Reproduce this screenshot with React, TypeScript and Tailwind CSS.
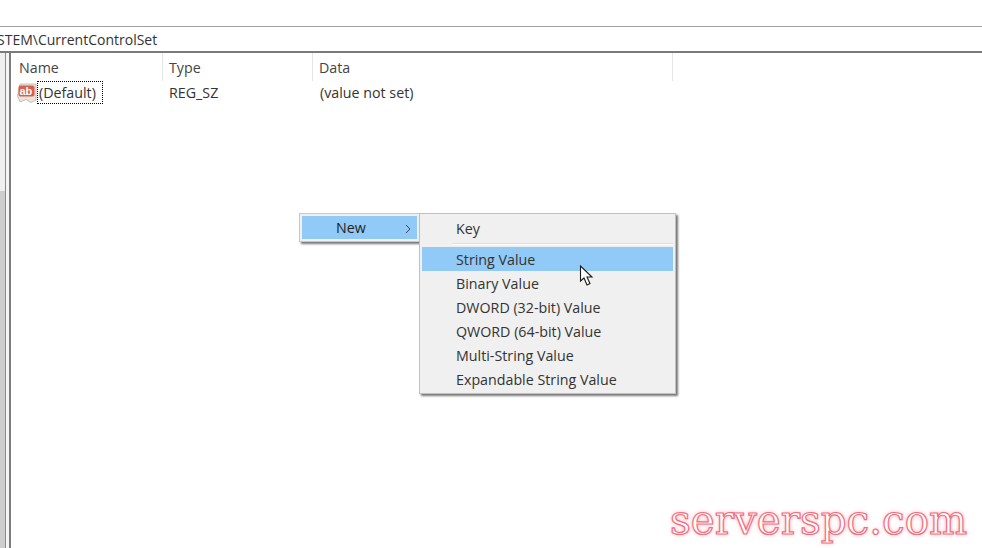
import React from 'react';

const font = { sans: "font-['Open_Sans','Noto_Sans',sans-serif]" };

const subItems = ['Binary Value', 'DWORD (32-bit) Value', 'QWORD (64-bit) Value', 'Multi-String Value', 'Expandable String Value'];

const RegIcon = () => (
  <svg width="20" height="20" viewBox="0 0 20 20" className="shrink-0">
    <path d="M0.5 13 L3 19 L9 16.5 L14 19.5 L19 17 L19 1 L3 1 Z" fill="#e8e4dc" stroke="#b9b5ad" strokeWidth="0.8" />
    <rect x="1.5" y="2.5" width="16" height="11" rx="2" fill="#d9604a" />
    <text x="2.4" y="11.5" fontSize="11" fontWeight="700" fill="#fff" fontFamily="'Liberation Sans', sans-serif">ab</text>
  </svg>
);

const Cursor = () => (
  <svg width="15" height="22" viewBox="0 0 15 22" className="absolute left-[579px] top-[265px]">
    <path d="M1.5 1 L1.5 16 L5 13 L8 20 L11 18.5 L8 12 L13 12 Z" fill="#fff" stroke="#1a1a1a" strokeWidth="1.1" strokeLinejoin="miter" />
  </svg>
);

export default function App() {
  return (
    <div className={`relative w-[982px] h-[548px] overflow-hidden bg-white text-[#222] ${font.sans}`}>
      <div className="flex flex-col h-full">
        <div className="h-[27px] shrink-0 bg-white border-b border-[#a0a0a0]" />
        <div className="h-[24px] shrink-0 box-content border-b-2 border-[#7a7a7a] flex items-center overflow-hidden">
          <span className="ml-[-3px] pt-[2px] text-[14px] leading-none text-[#333]">STEM\CurrentControlSet</span>
        </div>
        <div className="flex flex-1">
          <div className="w-[6px] shrink-0 flex flex-col border-r border-[#8a8a8a]">
            <div className="h-[138px] bg-[#efefef]" />
            <div className="flex-1 bg-[#cdcdcd]" />
          </div>
          <div className="w-[5px] shrink-0 border-r-2 border-[#7c7c7c] bg-[#f4f4f4]" />
          <div className="flex-1 flex flex-col">
            <div className="flex h-[28px] text-[14.25px] text-[#444]">
              <div className="w-[152px] pl-[8px] pt-[1px] flex items-center border-r border-[#e5e5e5]">Name</div>
              <div className="w-[150px] pl-[6px] pt-[1px] flex items-center border-r border-[#e5e5e5]">Type</div>
              <div className="w-[360px] pl-[6px] pt-[1px] flex items-center border-r border-[#e5e5e5]">Data</div>
            </div>
            <div className="flex h-[23px] items-center text-[14.25px] text-[#333]">
              <div className="w-[152px] pl-[6px] flex items-center">
                <RegIcon />
                <span className="pl-[1px] w-[66px] h-[23px] flex items-center border border-dotted border-black">(Default)</span>
              </div>
              <div className="w-[150px] pl-[6px]">REG_SZ</div>
              <div className="pl-[7px]">(value not set)</div>
            </div>
          </div>
        </div>
      </div>

      {/* context menu */}
      <div className="absolute left-[299px] top-[213px] w-[121px] h-[29px] p-[2px] bg-[#f0f0f0] border border-[#c8c8c8] shadow-[2px_2px_2px_#777] flex text-[14.25px]">
        <div className="flex-1 bg-[#91c9f7] flex items-center relative">
          <span className="ml-[34px] pt-[1px] text-[#222]">New</span>
          <svg width="6" height="10" viewBox="0 0 6 10" className="absolute right-[6px] top-[8px]">
            <path d="M1 1 L5 5 L1 9" fill="none" stroke="#444" strokeWidth="1" />
          </svg>
        </div>
      </div>

      {/* submenu */}
      <div className="absolute left-[419px] top-[213px] w-[257px] h-[181px] bg-[#f0f0f0] border border-[#c0c0c0] shadow-[2px_2px_2px_#777] p-[2px] text-[14.25px] text-[#333]">
        <div className="h-[25px] mb-[2px] pl-[34px] flex items-center">Key</div>
        <div className="h-[2px] ml-[30px] mb-[2px] bg-[#dcdcdc] border-b border-white" />
        <div className="h-[24px] pl-[34px] pt-[1px] flex items-center bg-[#91c9f7]">String Value</div>
        {subItems.map(item => (
          <div key={item} className="h-[24px] pl-[34px] pt-[1px] flex items-center">{item}</div>
        ))}
      </div>

      <Cursor />

      {/* watermark */}
      <div className="absolute left-[670px] top-[495px] font-['DejaVu_Serif',serif] text-[40.4px] leading-[50px] text-white [-webkit-text-stroke:1.2px_#ef6f80] [text-shadow:0_0_4px_#ff98a4]">
        serverspc.com
      </div>
    </div>
  );
}
